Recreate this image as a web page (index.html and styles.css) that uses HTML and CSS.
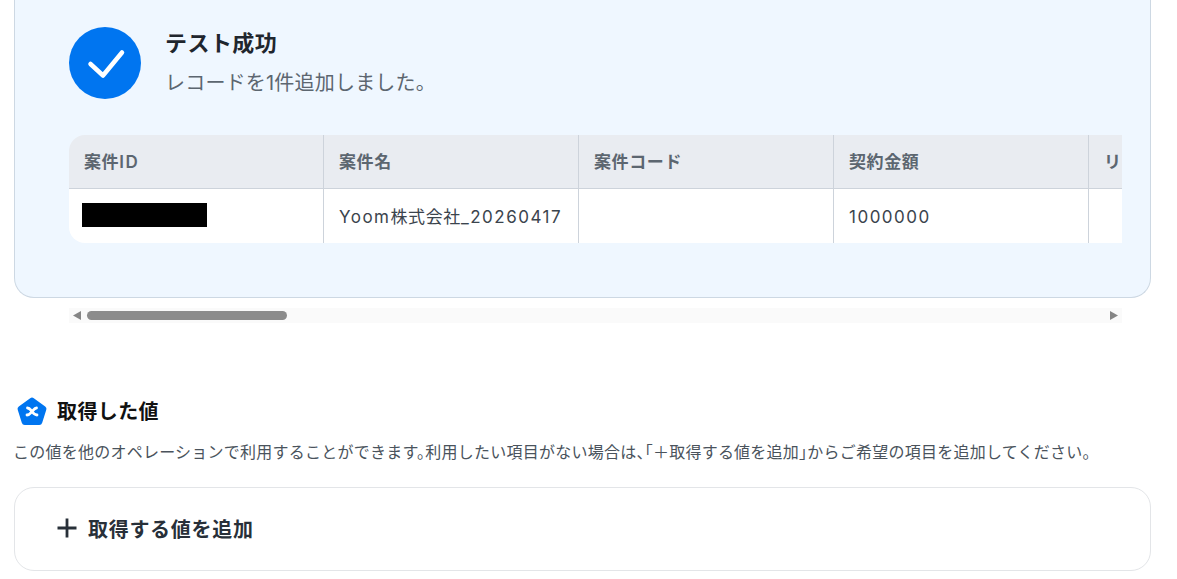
FILE: index.html
```html
<!DOCTYPE html>
<html lang="ja">
<head>
<meta charset="utf-8">
<title>テスト成功</title>
<link rel="stylesheet" href="styles.css">
</head>
<body>
<main class="page">
  <section class="result">
    <div class="status">
      <svg class="status-icon" viewBox="0 0 72 72" aria-hidden="true">
        <circle cx="36" cy="36" r="36" fill="#0075f0"/>
        <path d="M21.500 37 L34 48.500 L53 25.500" fill="none" stroke="#fff" stroke-width="4.500" stroke-linecap="round" stroke-linejoin="round"/>
      </svg>
      <div class="status-text">
        <h2 class="status-title">テスト成功</h2>
        <p class="status-sub">レコードを1件追加しました。</p>
      </div>
    </div>
    <div class="table-clip">
      <table class="records">
        <thead>
          <tr><th>案件<span class="latin">ID</span></th><th>案件名</th><th>案件コード</th><th>契約金額</th><th>リード</th></tr>
        </thead>
        <tbody>
          <tr><td><span class="redacted"></span></td><td><span class="latin">Yoom</span>株式会社<span class="latin">_20260417</span></td><td></td><td><span class="latin">1000000</span></td><td></td></tr>
        </tbody>
      </table>
    </div>
  </section>
  <div class="scrollbar">
    <span class="arrow arrow-left"></span>
    <span class="track"><span class="thumb"></span></span>
    <span class="arrow arrow-right"></span>
  </div>
  <section class="values">
    <div class="values-head">
      <svg class="values-icon" viewBox="0 0 30 29" aria-hidden="true">
        <path d="M13.200 1.200 Q15 0 16.800 1.200 L28.200 9.500 Q30 10.800 29.300 12.800 L25.200 25.800 Q24.500 28 22.300 28 L7.700 28 Q5.500 28 4.800 25.800 L0.700 12.800 Q0 10.800 1.800 9.500 Z" fill="#0075f0"/>
        <path d="M10.500 11 C13 11 13.500 13 15 14.500 C16.500 16.500 17.500 18 20 18 M10 18 C12.500 18 13.500 16 15 14.500 C16.500 13 17.500 11 19.500 11" fill="none" stroke="#fff" stroke-width="2.800" stroke-linecap="round"/>
      </svg>
      <h3 class="values-title">取得した値</h3>
    </div>
    <p class="values-desc">この値を他のオペレーションで利用することができます。利用したい項目がない場合は、「＋取得する値を追加」からご希望の項目を追加してください。</p>
    <div class="add-card">
      <svg class="plus" viewBox="0 0 20 20" aria-hidden="true"><path d="M10 0.500 V19.500 M0.500 10 H19.500" stroke="#283039" stroke-width="2.800" fill="none"/></svg>
      <span class="add-label">取得する値を追加</span>
    </div>
  </section>
</main>
</body>
</html>
```
FILE: styles.css
```css
* { box-sizing: border-box; }
html, body { margin: 0; padding: 0; background: #fff; }
body {
  font-family: Inter, "Noto Sans CJK JP", "Noto Sans", sans-serif;
  color: #283039;
  overflow: hidden;
  height: 579px;
}
.page { padding: 0 26px 0 14px; }
.result {
  height: 298px;
  background: #eff7ff;
  border: 1px solid #cdd8e3;
  border-top: 0;
  border-radius: 0 0 20px 20px;
  padding: 27px 28px 0 54px;
}
.status { display: flex; gap: 24px; height: 108px; }
.status-icon { width: 72px; height: 72px; flex: none; }
.status-title { margin: 0; font-size: 22px; line-height: 32px; font-weight: 600; letter-spacing: 0.02em; color: #1f262e; }
.status-sub { margin: 8px 0 0; font-size: 20px; line-height: 32px; font-weight: 400; color: #5c6670; letter-spacing: 0.2px; }
.table-clip { width: 1053px; overflow: hidden; border-radius: 16px 0 0 16px; }
.records { border-collapse: separate; border-spacing: 0; table-layout: fixed; width: 1275px; font-size: 17px; line-height: 24px; letter-spacing: 0.6px; }
.records th, .records td { width: 255px; padding: 0 15px; text-align: left; border-right: 1px solid #cdd3db; overflow: hidden; white-space: nowrap; }
.records th { height: 54px; background: #e9ecf1; color: #5c6670; font-weight: 600; border-bottom: 1px solid #cdd3db; }
.records td { height: 54px; padding-top: 1px; background: #fff; color: #3b444d; font-weight: 400; }
.latin { font-size: 17px; letter-spacing: 1.5px; }
.redacted { display: block; width: 125px; height: 24px; background: #000; margin: -2px 0 2px -2px; }
.scrollbar { display: flex; align-items: center; width: 1053px; height: 15px; margin: 10px 0 0 55px; background: #fafafa; padding: 0 4px; }
.arrow { width: 8px; height: 9px; flex: none; background: #858585; }
.arrow-left { clip-path: polygon(100% 0, 100% 100%, 0 50%); }
.arrow-right { clip-path: polygon(0 0, 0 100%, 100% 50%); }
.track { flex: 1; padding: 0 6px; display: flex; }
.thumb { width: 200px; height: 9px; background: #8c8c8c; border-radius: 5px; }
.values { margin-top: 75px; }
.values-head { display: flex; align-items: center; gap: 10px; padding-left: 3px; height: 28px; }
.values-icon { width: 30px; height: 29px; flex: none; margin-bottom: 1px; }
.values-title { margin: 0; font-size: 20px; line-height: 28px; font-weight: 600; color: #111; letter-spacing: 0.02em; }
.values-desc { margin: 13px 0 0 -1px; font-size: 16px; line-height: 26px; color: #4a535c; white-space: nowrap; font-feature-settings: "halt"; letter-spacing: 0.24px; }
.add-card { display: flex; align-items: center; gap: 11px; height: 84px; margin-top: 22px; padding: 0 0 2px 42px; border: 1px solid #e3e5e8; border-radius: 20px; }
.plus { width: 20px; height: 20px; flex: none; }
.add-label { font-size: 20px; font-weight: 600; letter-spacing: 0.035em; }
```
